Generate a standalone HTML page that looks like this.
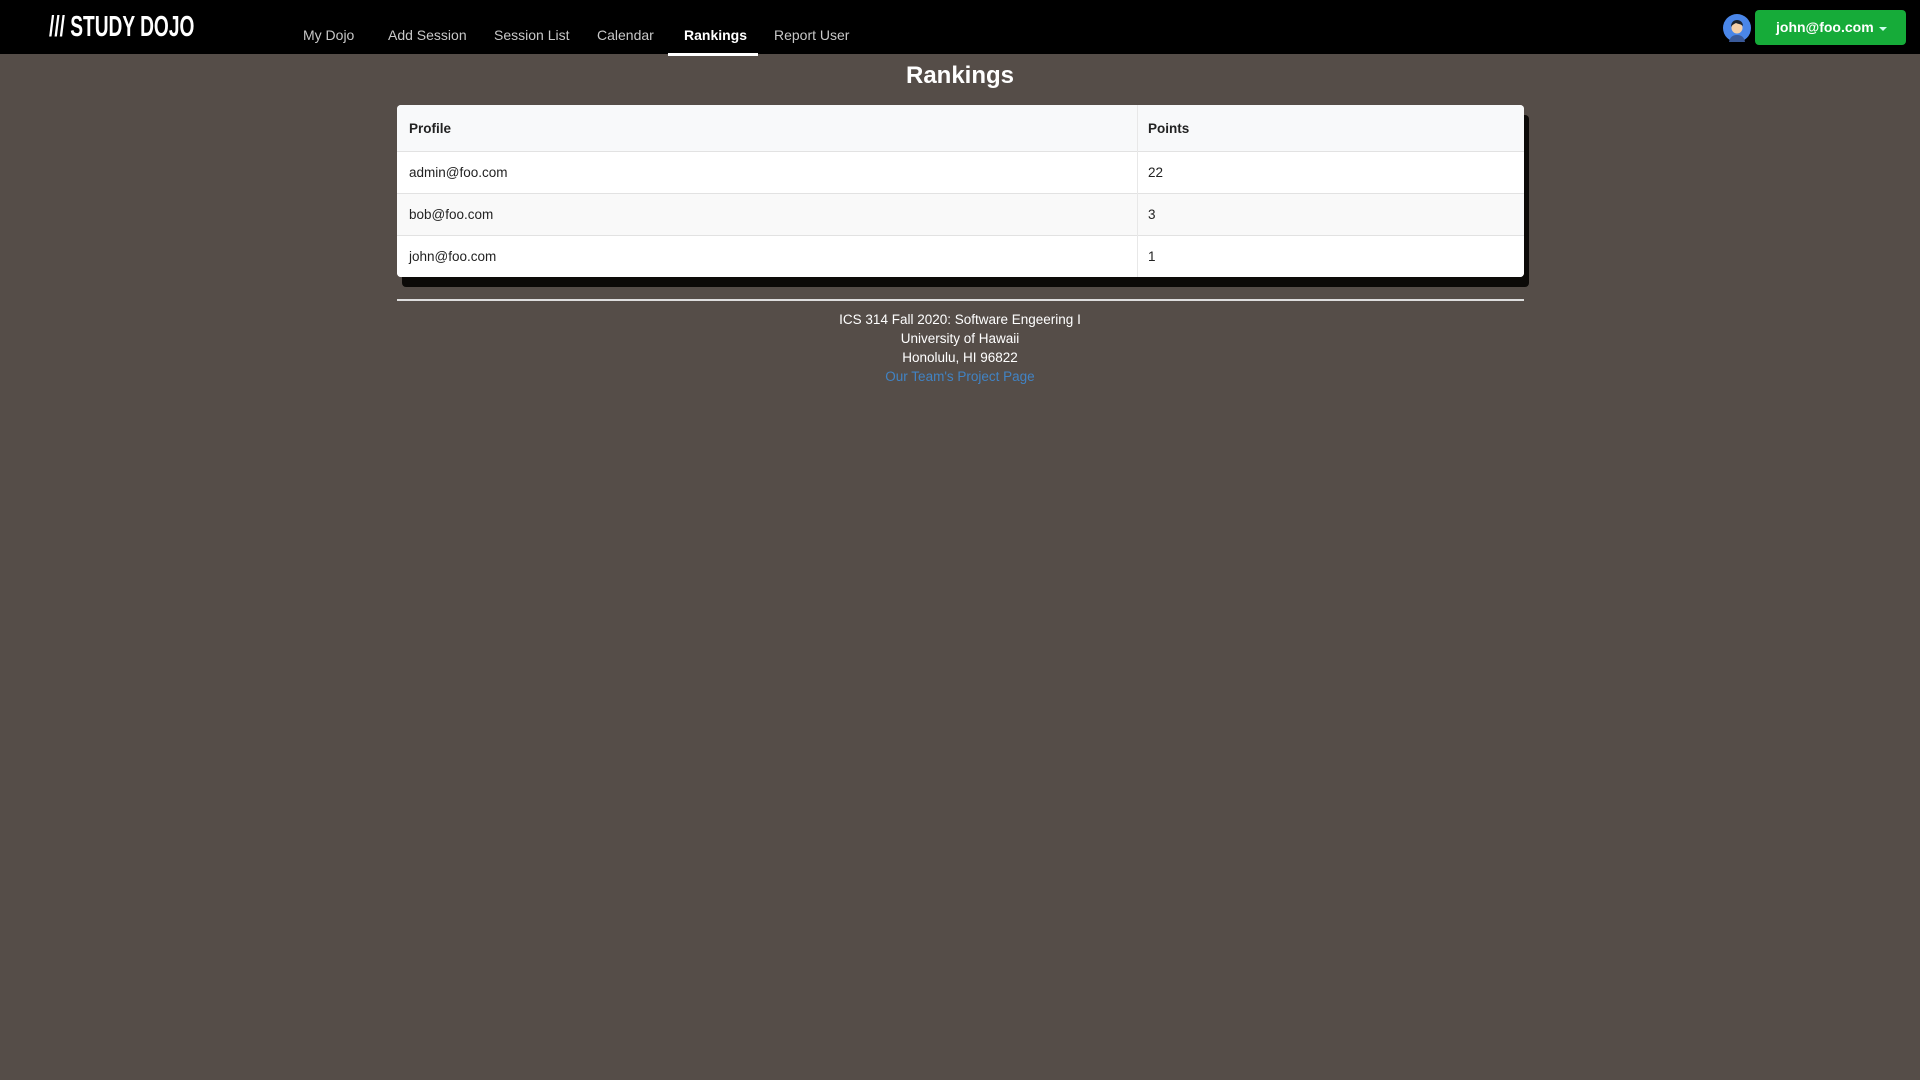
<!DOCTYPE html>
<html><head><meta charset="utf-8"><style>
*{margin:0;padding:0;box-sizing:border-box}
body{width:1920px;height:1080px;background:#554d48;font-family:"Liberation Sans",sans-serif;position:relative;overflow:hidden}
.nav{position:absolute;left:0;top:0;width:1920px;height:54px;background:#000}
.logo{position:absolute;left:49px;top:11px;color:#fff;font-weight:bold;font-size:29px;letter-spacing:0;transform:scaleX(0.66);transform-origin:left}
.item{position:absolute;top:27px;color:#c8c8c8;font-size:14px}
.active{color:#fff;font-weight:bold}
.ul{position:absolute;left:668px;top:53px;width:90px;height:3px;background:#fff}
.btn{position:absolute;left:1755px;top:10px;width:151px;height:35px;background:#16ab39;border-radius:4px;color:#fff;font-weight:bold;font-size:14px;line-height:35px;padding-left:21px}
.caret{position:absolute;right:19px;top:17px;border-left:4px solid transparent;border-right:4px solid transparent;border-top:4px solid #cfe}
h1{position:absolute;top:62px;width:1920px;text-align:center;color:#fff;font-size:24px}
.tbl{position:absolute;left:397px;top:105px;width:1127px;height:172px;background:#fff;border-radius:4px;box-shadow:5px 10px 0 #0c0a08;overflow:hidden;font-size:13.5px;color:#222}
.row{position:absolute;left:0;width:1127px;border-top:1px solid #e2e2e2}
.row span{position:absolute;top:0}
.c1{left:12px}.c2{left:751px}
.div{position:absolute;left:740px;top:0;width:1px;height:172px;background:#e8e8e8}
hr{position:absolute;left:397px;top:299px;width:1127px;border:0;border-top:2px solid #ddd}
.foot{position:absolute;top:310px;width:1920px;text-align:center;color:#fff;font-size:13.5px;line-height:19px}
.foot a{color:#4183c4;text-decoration:none}
</style></head><body>
<div class="nav">
<div class="logo">/// STUDY DOJO</div>
<div class="item" style="left:303px">My Dojo</div>
<div class="item" style="left:388px">Add Session</div>
<div class="item" style="left:494px">Session List</div>
<div class="item" style="left:597px">Calendar</div>
<div class="item active" style="left:684px">Rankings</div>
<div class="item" style="left:774px">Report User</div>
<div class="ul"></div>
<svg style="position:absolute;left:1723px;top:14px" width="28" height="28" viewBox="0 0 28 28"><circle cx="14" cy="14" r="14" fill="#4a86e8"/><path d="M6 28c1-6 5-7 8-7s7 1 8 7z" fill="#3a5a9a"/><circle cx="14" cy="14" r="5.5" fill="#f4cfa8"/><path d="M8 13c0-5 3-7 6-7s6 2 6 6c-2-2-5-2-7-3-2 1-4 2-5 4z" fill="#1c2430"/></svg>
<div class="btn">john@foo.com<div class="caret"></div></div>
</div>
<h1>Rankings</h1>
<div class="tbl">
<div style="position:absolute;left:0;top:0;width:1127px;height:46px;background:#f8f9fa"></div>
<div class="row" style="top:0;height:46px;border-top:0;font-weight:bold"><span class="c1" style="top:16px">Profile</span><span class="c2" style="top:16px">Points</span></div>
<div class="row" style="top:46px;height:42px;background:#fff"><span class="c1" style="top:13px">admin@foo.com</span><span class="c2" style="top:13px">22</span></div>
<div class="row" style="top:88px;height:42px;background:#f9f9f9"><span class="c1" style="top:13px">bob@foo.com</span><span class="c2" style="top:13px">3</span></div>
<div class="row" style="top:130px;height:42px;background:#fff"><span class="c1" style="top:13px">john@foo.com</span><span class="c2" style="top:13px">1</span></div>
<div class="div"></div>
</div>
<hr>
<div class="foot">ICS 314 Fall 2020: Software Engeering I<br>University of Hawaii<br>Honolulu, HI 96822<br><a>Our Team's Project Page</a></div>
</body></html>
